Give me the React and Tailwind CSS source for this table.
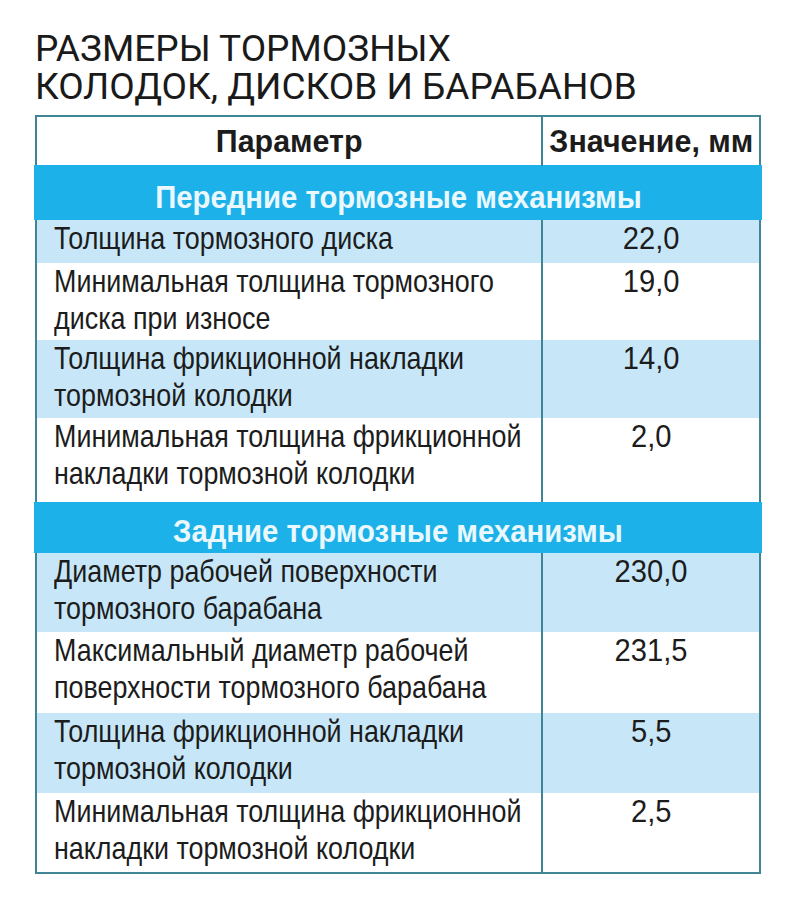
const front = [
  { label: ['Толщина тормозного диска'], value: '22,0', h: 'h-[43px]', tint: true },
  { label: ['Минимальная толщина тормозного', 'диска при износе'], value: '19,0', h: 'h-[77px]' },
  { label: ['Толщина фрикционной накладки', 'тормозной колодки'], value: '14,0', h: 'h-[78px]', tint: true },
  { label: ['Минимальная толщина фрикционной', 'накладки тормозной колодки'], value: '2,0', h: 'h-[84px]' },
]

const rear = [
  { label: ['Диаметр рабочей поверхности', 'тормозного барабана'], value: '230,0', h: 'h-[79px]', tint: true },
  { label: ['Максимальный диаметр рабочей', 'поверхности тормозного барабана'], value: '231,5', h: 'h-[81px]' },
  { label: ['Толщина фрикционной накладки', 'тормозной колодки'], value: '5,5', h: 'h-[80px]', tint: true },
  { label: ['Минимальная толщина фрикционной', 'накладки тормозной колодки'], value: '2,5', h: 'h-[79px]' },
]

// Arial Narrow is not installed, so Liberation Sans is squeezed horizontally
const sans = { fontFamily: '"Liberation Sans", Arial, sans-serif' }

function Row({ row }) {
  return (
    <div className={`grid grid-cols-[506px_1fr] ${row.h} ${row.tint ? 'bg-[#c7e7f8]' : 'bg-white'}`}>
      <div className="border-r-2 border-[#3f8595] pl-[17px] text-[32px] leading-[37px] text-[#1c1c1c]">
        {row.label.map((l) => (
          <div key={l} className="whitespace-nowrap origin-left scale-x-[0.84]">
            {l}
          </div>
        ))}
      </div>
      <div className="text-center text-[32px] leading-[37px] text-[#1c1c1c]">
        <span className="inline-block scale-x-[0.91]">{row.value}</span>
      </div>
    </div>
  )
}

function Section({ title, h, pt }) {
  return (
    <div className={`${h} -mx-[3px] bg-[#1cb2e9] flex items-center justify-center`}>
      <span className={`inline-block whitespace-nowrap font-bold text-[31px] text-[#eaf8fe] ${pt} scale-x-[0.945]`}>
        {title}
      </span>
    </div>
  )
}

export default function App() {
  return (
    <div className="min-h-screen bg-white pt-[30px] pl-[35px]" style={sans}>
      {/* Title */}
      <h1
        className="text-[37px] leading-[38px] text-[#1a1a1a] font-normal"
        style={{ fontFamily: 'Roboto, "Liberation Sans", sans-serif' }}
      >
        <div>РАЗМЕРЫ ТОРМОЗНЫХ</div>
        <div>КОЛОДОК, ДИСКОВ И БАРАБАНОВ</div>
      </h1>

      {/* Table */}
      <div className="mt-[9px] w-[726px] border-2 border-[#3f8595]">
        <div className="grid grid-cols-[506px_1fr] h-[48px] bg-white">
          <div className="border-r-2 border-[#3f8595] flex items-end justify-center pb-[1px] font-bold text-[32px] text-[#1c1c1c]">
            <span className="inline-block whitespace-nowrap scale-x-[0.95]">Параметр</span>
          </div>
          <div className="flex items-end justify-center pb-[1px] font-bold text-[32px] text-[#1c1c1c]">
            <span className="inline-block whitespace-nowrap scale-x-[0.95]">Значение, мм</span>
          </div>
        </div>

        <Section title="Передние тормозные механизмы" h="h-[55px]" pt="pt-[12px]" />
        {front.map((r, i) => (
          <Row key={i} row={r} />
        ))}

        <Section title="Задние тормозные механизмы" h="h-[51px]" pt="pt-[9px]" />
        {rear.map((r, i) => (
          <Row key={i} row={r} />
        ))}
      </div>
    </div>
  )
}
